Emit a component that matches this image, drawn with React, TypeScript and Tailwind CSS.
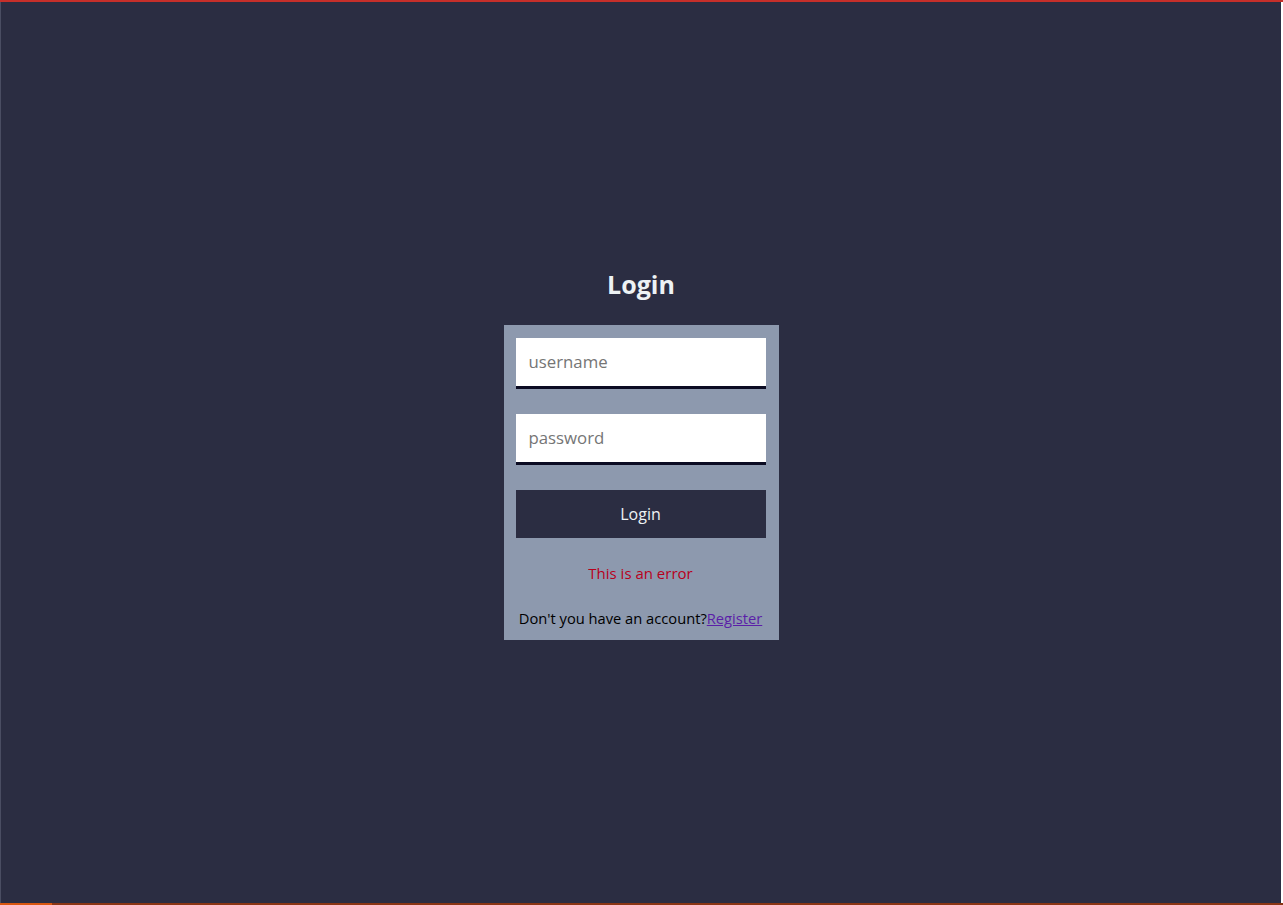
import React from 'react';

export default function App() {
  return (
    <div className="h-screen w-full flex flex-col bg-white font-['Open_Sans',sans-serif]">
      <div className="h-[2px] w-full bg-[#c62f2a]" />
      <div className="flex-1 flex mr-[2px] border-l border-l-[#4a4d62] bg-[#2b2d42]">
        <div className="flex-1 flex flex-col items-center justify-center pt-[2px]">
          <h1 className="text-[25px] leading-[32px] font-bold text-[#edf2f4] mb-[25px]">Login</h1>
          <form className="w-[275px] bg-[#8d99ae] pt-[13px] pb-[10px] pl-3 flex flex-col">
            <input
              placeholder="username"
              className="w-[250px] h-[51px] bg-white border-b-[3px] border-b-[#0b0b22] px-[13px] text-[16.8px] text-black placeholder:text-[#757575] outline-none"
            />
            <input
              type="password"
              placeholder="password"
              className="mt-[25px] w-[250px] h-[51px] bg-white border-b-[3px] border-b-[#0b0b22] px-[13px] text-[16.8px] text-black placeholder:text-[#757575] outline-none"
            />
            <button
              type="button"
              className="mt-[25px] w-[250px] h-[48px] bg-[#2b2d42] text-[#edf2f4] text-[16px]"
            >
              Login
            </button>
            <p className="mt-[23px] w-[250px] text-center text-[15px] leading-[24px] text-[#b8001c]">This is an error</p>
            <p className="mt-[21px] w-[250px] text-center text-[14.7px] leading-[24px] text-black whitespace-nowrap">
              Don't you have an account?<a href="#" className="underline text-[#5b1fa8]">Register</a>
            </p>
          </form>
        </div>
      </div>
      <div className="h-[2px] w-full flex">
        <div className="w-[52px] bg-[#d9560f]" />
        <div className="flex-1 bg-[#8a3514]" />
      </div>
    </div>
  );
}
